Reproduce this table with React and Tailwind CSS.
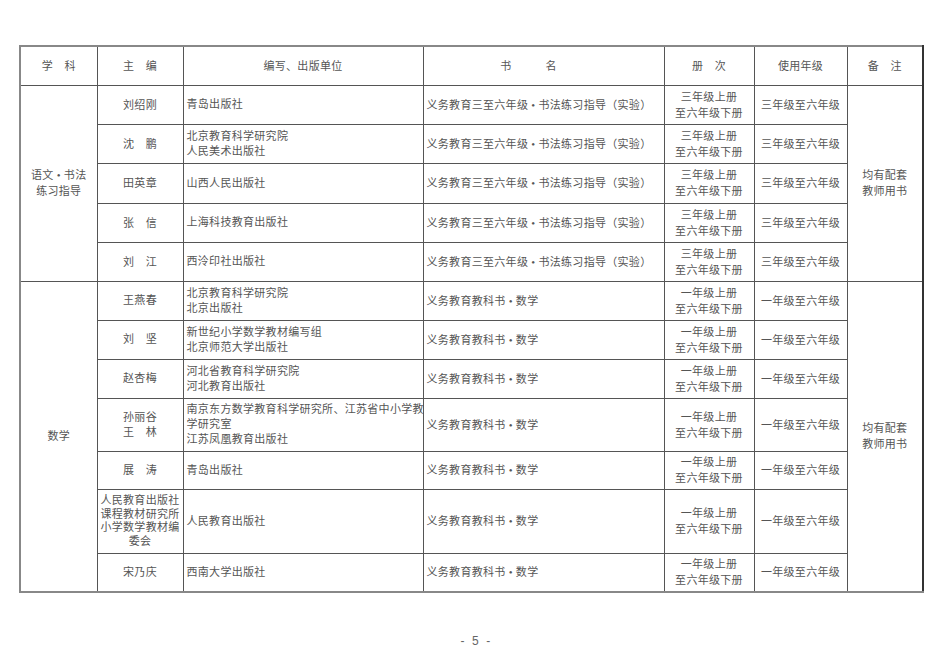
import React from 'react';

const yuwen = [
  { editor: '刘绍刚', units: ['青岛出版社'], h: 'h-[39px]' },
  { editor: '沈　鹏', units: ['北京教育科学研究院', '人民美术出版社'], h: 'h-[39px]' },
  { editor: '田英章', units: ['山西人民出版社'], h: 'h-[40px]' },
  { editor: '张　信', units: ['上海科技教育出版社'], h: 'h-[39px]' },
  { editor: '刘　江', units: ['西泠印社出版社'], h: 'h-[39px]' },
];

const shuxue = [
  { editor: ['王燕春'], units: ['北京教育科学研究院', '北京出版社'], h: 'h-[39px]' },
  { editor: ['刘　坚'], units: ['新世纪小学数学教材编写组', '北京师范大学出版社'], h: 'h-[39px]' },
  { editor: ['赵杏梅'], units: ['河北省教育科学研究院', '河北教育出版社'], h: 'h-[39px]' },
  {
    editor: ['孙丽谷', '王　林'],
    units: ['南京东方数学教育科学研究所、江苏省中小学教', '学研究室', '江苏凤凰教育出版社'],
    h: 'h-[53px]',
  },
  { editor: ['展　涛'], units: ['青岛出版社'], h: 'h-[38px]' },
  {
    editor: ['人民教育出版社', '课程教材研究所', '小学数学教材编', '委会'],
    units: ['人民教育出版社'],
    h: 'h-[64px]',
    tight: true,
  },
  { editor: ['宋乃庆'], units: ['西南大学出版社'], h: 'h-[39px]' },
];

const cell = 'border border-[#555] align-middle';

const Lines = ({ items, className = '' }) => (
  <div className={className}>
    {items.map((t, i) => (
      <div key={i} className="whitespace-nowrap">
        {t}
      </div>
    ))}
  </div>
);

const App = () => {
  return (
    <div className="w-[950px] h-[672px] bg-white pt-[45px] pl-[19px] font-['Liberation_Serif','Noto_Sans_CJK_SC',serif] text-[11px] text-[#555] tracking-[0.3px]">
      <table className="table-fixed border-collapse border-2 border-[#888] border-r-[#333] w-[903px]">
        <colgroup>
          <col className="w-[77px]" />
          <col className="w-[86px]" />
          <col className="w-[240px]" />
          <col className="w-[241px]" />
          <col className="w-[90px]" />
          <col className="w-[93px]" />
          <col className="w-[76px]" />
        </colgroup>
        <thead>
          <tr className="h-[39px] text-center">
            <th className={`${cell} font-normal`}>学　科</th>
            <th className={`${cell} font-normal`}>主　编</th>
            <th className={`${cell} font-normal`}>编写、出版单位</th>
            <th className={`${cell} font-normal pr-[30px]`}>书　　　名</th>
            <th className={`${cell} font-normal`}>册　次</th>
            <th className={`${cell} font-normal`}>使用年级</th>
            <th className={`${cell} font-normal`}>备　注</th>
          </tr>
        </thead>
        <tbody className="leading-[16px]">
          {yuwen.map((r, i) => (
            <tr key={r.editor} className={r.h}>
              {i === 0 && (
                <td rowSpan={5} className={`${cell} text-center`}>
                  <Lines items={['语文 • 书法', '练习指导']} />
                </td>
              )}
              <td className={`${cell} text-center`}>{r.editor}</td>
              <td className={`${cell} pl-[3px]`}>
                <Lines items={r.units} className="leading-[15px]" />
              </td>
              <td className={`${cell} pl-[3px] whitespace-nowrap`}>义务教育三至六年级 • 书法练习指导（实验）</td>
              <td className={`${cell} text-center`}>
                <Lines items={['三年级上册', '至六年级下册']} />
              </td>
              <td className={`${cell} text-center whitespace-nowrap`}>三年级至六年级</td>
              {i === 0 && (
                <td rowSpan={5} className={`${cell} text-center`}>
                  <Lines items={['均有配套', '教师用书']} />
                </td>
              )}
            </tr>
          ))}
          {shuxue.map((r, i) => (
            <tr key={i} className={r.h}>
              {i === 0 && (
                <td rowSpan={7} className={`${cell} text-center`}>
                  数学
                </td>
              )}
              <td className={`${cell} text-center`}>
                <Lines items={r.editor} className={r.tight ? 'leading-[13.5px]' : 'leading-[15px]'} />
              </td>
              <td className={`${cell} pl-[3px]`}>
                <Lines items={r.units} className="leading-[15px]" />
              </td>
              <td className={`${cell} pl-[3px] whitespace-nowrap`}>义务教育教科书 • 数学</td>
              <td className={`${cell} text-center`}>
                <Lines items={['一年级上册', '至六年级下册']} />
              </td>
              <td className={`${cell} text-center whitespace-nowrap`}>一年级至六年级</td>
              {i === 0 && (
                <td rowSpan={7} className={`${cell} text-center`}>
                  <Lines items={['均有配套', '教师用书']} />
                </td>
              )}
            </tr>
          ))}
        </tbody>
      </table>
      <div className="w-[913px] mt-[39px] text-center text-[12px] text-[#666] font-['Liberation_Sans',sans-serif]">
        -&nbsp;&nbsp;5&nbsp;&nbsp;-
      </div>
    </div>
  );
};

export default App;
